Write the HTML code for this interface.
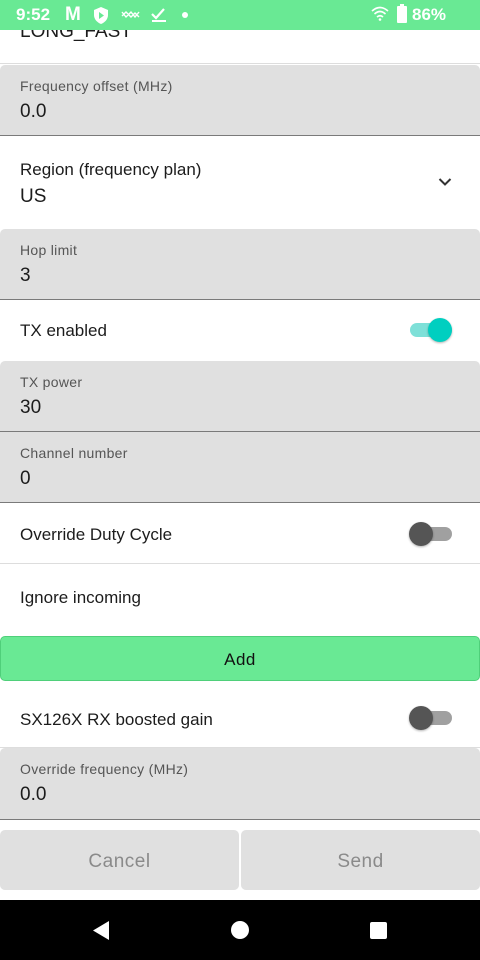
<!DOCTYPE html>
<html><head><style>
*{margin:0;padding:0;box-sizing:border-box}
body{width:480px;height:960px;overflow:hidden;background:#fff;font-family:"Liberation Sans",sans-serif;position:relative;color:#1c1c1c}
.a{position:absolute}
.sb{left:0;top:0;width:480px;height:30px;background:#69e994;color:#fff;font-weight:bold;font-size:17px}
.f{left:0;width:480px;background:#e0e0e0;border-bottom:1px solid #7a7a7a;border-radius:5px 5px 0 0}
.lbl{position:absolute;left:20px;font-size:14px;color:#555;letter-spacing:.3px}
.val{position:absolute;left:20px;font-size:19px;color:#1c1c1c}
.t{left:20px;font-size:17px;color:#1c1c1c}
.sw{width:42px;height:14px;border-radius:7px}
.kn{width:24px;height:24px;border-radius:12px;box-shadow:0 1px 2px rgba(0,0,0,.3)}
</style></head><body>
<div class="a sb">
<span class="a" style="left:16px;top:5px">9:52</span>
<span class="a" style="left:65px;top:4px;font-size:19px">M</span>
<svg class="a" style="left:93px;top:7px" width="16" height="17" viewBox="0 0 16 17"><path d="M8 0L15 3V8C15 12 12 15.5 8 17C4 15.5 1 12 1 8V3Z" fill="#fff"/><path d="M6 5L11 8.5L6 12Z" fill="#69e994"/></svg>
<svg class="a" style="left:121px;top:10px" width="20" height="10" viewBox="0 0 20 10"><path d="M1 6L5 2L10 7L14 3L18 7M1 2L5 7L10 2L14 7L18 2" stroke="#fff" stroke-width="1.4" fill="none"/></svg>
<svg class="a" style="left:151px;top:7px" width="16" height="16" viewBox="0 0 16 16"><path d="M1 7L5 11L13 2" stroke="#fff" stroke-width="2.2" fill="none"/><rect x="1" y="13" width="14" height="2" fill="#fff"/></svg>
<div class="a" style="left:182px;top:12px;width:6px;height:6px;border-radius:3px;background:#fff"></div>
<svg class="a" style="left:371px;top:6px" width="18" height="17" viewBox="0 0 18 17"><path d="M1 5Q9 -2 17 5M3.5 8Q9 3 14.5 8M6 11Q9 8.5 12 11" stroke="#fff" stroke-width="1.6" fill="none"/><circle cx="9" cy="13.5" r="1.3" fill="#fff"/></svg>
<div class="a" style="left:397px;top:6px;width:10px;height:17px;background:#fff;border-radius:1px"></div>
<div class="a" style="left:400px;top:4px;width:4px;height:3px;background:#fff"></div>
<span class="a" style="left:412px;top:5px">86%</span>
</div>
<div class="a t" style="top:21px;font-size:19px;clip-path:inset(9px 0 0 0)">LONG_FAST</div>
<div class="a" style="left:0;top:63px;width:480px;height:1px;background:#ddd"></div>
<div class="a f" style="top:65px;height:71px"><span class="lbl" style="top:13px">Frequency offset (MHz)</span><span class="val" style="top:36px">0.0</span></div>
<div class="a t" style="top:160px">Region (frequency plan)</div>
<div class="a t" style="top:186px;font-size:19px">US</div>
<svg class="a" style="left:438px;top:177px" width="14" height="10" viewBox="0 0 14 10"><path d="M1.5 2L7 7.5L12.5 2" stroke="#333" stroke-width="2" fill="none"/></svg>
<div class="a f" style="top:229px;height:71px"><span class="lbl" style="top:13px">Hop limit</span><span class="val" style="top:36px">3</span></div>
<div class="a t" style="top:321px">TX enabled</div>
<div class="a sw" style="left:410px;top:323px;background:#7ee0d8"></div>
<div class="a kn" style="left:428px;top:318px;background:#00cfc0"></div>
<div class="a f" style="top:361px;height:71px"><span class="lbl" style="top:13px">TX power</span><span class="val" style="top:36px">30</span></div>
<div class="a f" style="top:432px;height:71px;border-radius:0"><span class="lbl" style="top:13px">Channel number</span><span class="val" style="top:36px">0</span></div>
<div class="a t" style="top:525px">Override Duty Cycle</div>
<div class="a sw" style="left:410px;top:527px;background:#a0a0a0"></div>
<div class="a kn" style="left:409px;top:522px;background:#555"></div>
<div class="a" style="left:0;top:563px;width:480px;height:1px;background:#ddd"></div>
<div class="a t" style="top:588px">Ignore incoming</div>
<div class="a" style="left:0;top:636px;width:480px;height:45px;background:#69e994;border:1.5px solid #4fcf7a;border-radius:5px;text-align:center;line-height:45px;font-size:17px;color:#111;letter-spacing:.5px">Add</div>
<div class="a t" style="top:710px">SX126X RX boosted gain</div>
<div class="a sw" style="left:410px;top:711px;background:#a0a0a0"></div>
<div class="a kn" style="left:409px;top:706px;background:#555"></div>
<div class="a" style="left:0;top:747px;width:480px;height:1px;background:#ddd"></div>
<div class="a f" style="top:748px;height:72px"><span class="lbl" style="top:13px">Override frequency (MHz)</span><span class="val" style="top:36px">0.0</span></div>
<div class="a" style="left:0;top:830px;width:239px;height:60px;background:#e0e0e0;border-radius:5px;text-align:center;line-height:64px;font-size:19px;color:#8a8a8a;letter-spacing:.5px">Cancel</div>
<div class="a" style="left:241px;top:830px;width:239px;height:60px;background:#e0e0e0;border-radius:5px;text-align:center;line-height:64px;font-size:19px;color:#8a8a8a;letter-spacing:.5px">Send</div>
<div class="a" style="left:0;top:900px;width:480px;height:60px;background:#000"></div>
<svg class="a" style="left:91px;top:920px" width="20" height="21" viewBox="0 0 20 21"><path d="M18 1V20L2 10.5Z" fill="#fff"/></svg>
<div class="a" style="left:231px;top:921px;width:18px;height:18px;border-radius:9px;background:#fff"></div>
<div class="a" style="left:370px;top:922px;width:17px;height:17px;border-radius:2px;background:#fff"></div>
</body></html>
